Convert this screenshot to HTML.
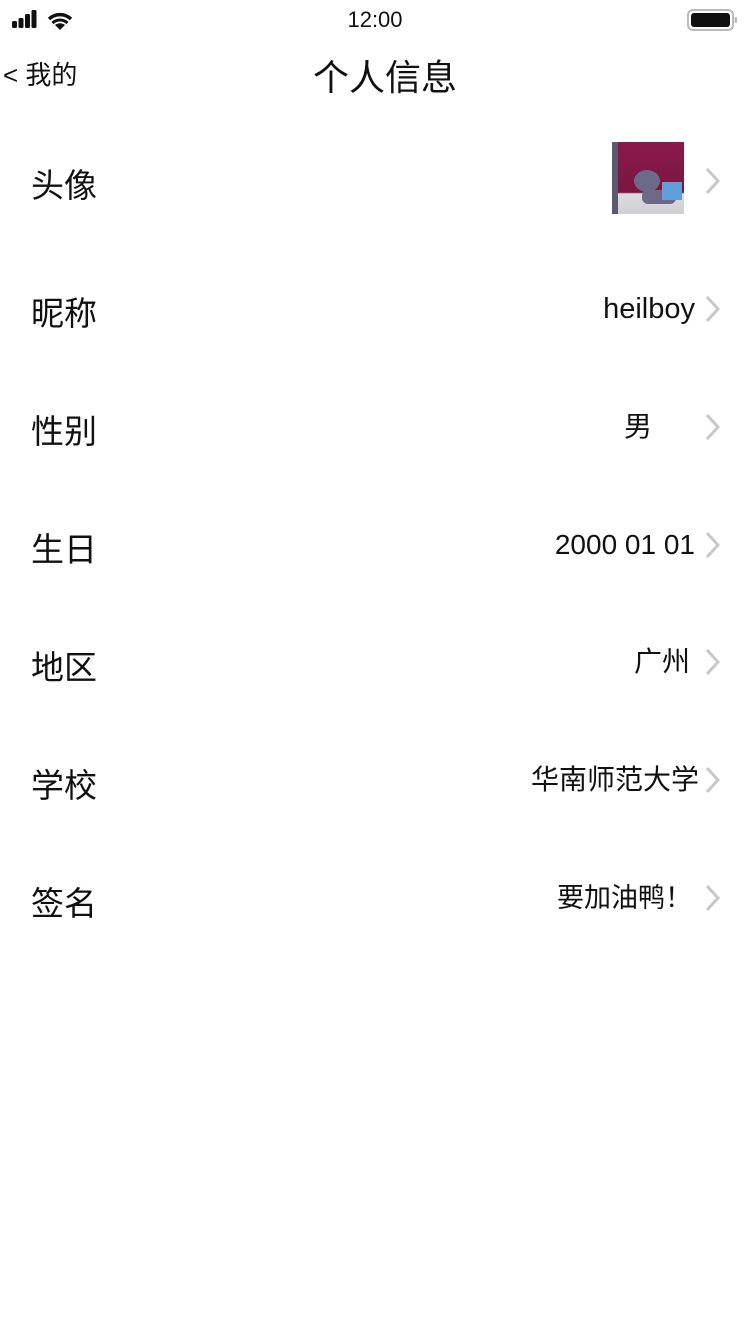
<!DOCTYPE html>
<html><head><meta charset="utf-8"><style>
body{margin:0;width:750px;height:1334px;background:#fff;position:relative;font-family:"Liberation Sans","Noto Sans CJK SC",sans-serif;color:#111;overflow:hidden}
.a{position:absolute;white-space:nowrap}
.lab{left:31px;font-size:33px;line-height:40px}
.val{font-size:28px;line-height:32px;text-align:right}
.chev{position:absolute;left:703px;width:20px;height:28px}
</style></head><body>
<svg class="a" style="left:12px;top:10px" width="80" height="22">
<rect x="0" y="11" width="5" height="7" rx="1.5" fill="#111"/><rect x="6.5" y="8" width="5" height="10" rx="1.5" fill="#111"/><rect x="13" y="4" width="5" height="14" rx="1.5" fill="#111"/><rect x="19.5" y="0" width="5" height="18" rx="1.5" fill="#111"/>
<path d="M48 20 L43 15 A8 8 0 0 1 53 15 Z" fill="#111"/>
<path d="M37 9 A16 16 0 0 1 59 9" stroke="#111" stroke-width="3.5" fill="none"/>
<path d="M40.5 13 A11 11 0 0 1 55.5 13" stroke="#111" stroke-width="3" fill="none"/>
</svg>
<div class="a" style="left:0;width:750px;top:6px;text-align:center;font-size:22px;line-height:28px">12:00</div>
<svg class="a" style="left:687px;top:9px" width="52" height="24">
<rect x="1" y="1" width="45" height="20" rx="5" fill="none" stroke="#bbb" stroke-width="2"/>
<rect x="4" y="4" width="39" height="14" rx="3" fill="#111"/>
<rect x="47.5" y="8" width="2.5" height="6" rx="1" fill="#bbb"/>
</svg>
<div class="a" style="left:3px;top:58px;font-size:26px;line-height:34px">&lt; 我的</div>
<div class="a" style="left:0;width:770px;top:56px;text-align:center;font-size:36px;line-height:44px">个人信息</div>
<div class="a lab" style="top:166px">头像</div>
<div class="a" style="left:612px;top:142px;width:72px;height:72px;background:linear-gradient(#8a1a4a,#7a1640 70%,#ddd 72%,#cfcfd6);overflow:hidden">
<div class="a" style="left:0;top:0;width:6px;height:72px;background:#5c5870"></div>
<div class="a" style="left:22px;top:28px;width:26px;height:22px;border-radius:50%;background:#6c6a88"></div>
<div class="a" style="left:30px;top:48px;width:34px;height:14px;border-radius:6px;background:#6c6a88"></div>
<div class="a" style="left:50px;top:40px;width:20px;height:18px;background:#5ea0d8"></div>
</div>
<div class="a lab" style="top:294px">昵称</div>
<div class="a lab" style="top:412px">性别</div>
<div class="a lab" style="top:530px">生日</div>
<div class="a lab" style="top:648px">地区</div>
<div class="a lab" style="top:766px">学校</div>
<div class="a lab" style="top:884px">签名</div>

<div class="a val" style="right:55px;top:293px;font-size:29px">heilboy</div>
<div class="a val" style="right:98px;top:411px">男</div>
<div class="a val" style="right:55px;top:529px">2000 01 01</div>
<div class="a val" style="right:60px;top:646px">广州</div>
<div class="a val" style="right:51px;top:764px">华南师范大学</div>
<div class="a val" style="right:58px;top:882px;font-size:27px">要加油鸭！</div>

<svg width="0" height="0" style="position:absolute"><defs><path id="c" d="M4 2 L15 14 L4 26" stroke="#c8c8c8" stroke-width="3" fill="none"/></defs></svg>
<svg class="chev" style="top:167px"><use href="#c"/></svg>
<svg class="chev" style="top:295px"><use href="#c"/></svg>
<svg class="chev" style="top:413px"><use href="#c"/></svg>
<svg class="chev" style="top:531px"><use href="#c"/></svg>
<svg class="chev" style="top:648px"><use href="#c"/></svg>
<svg class="chev" style="top:766px"><use href="#c"/></svg>
<svg class="chev" style="top:884px"><use href="#c"/></svg>
</body></html>
